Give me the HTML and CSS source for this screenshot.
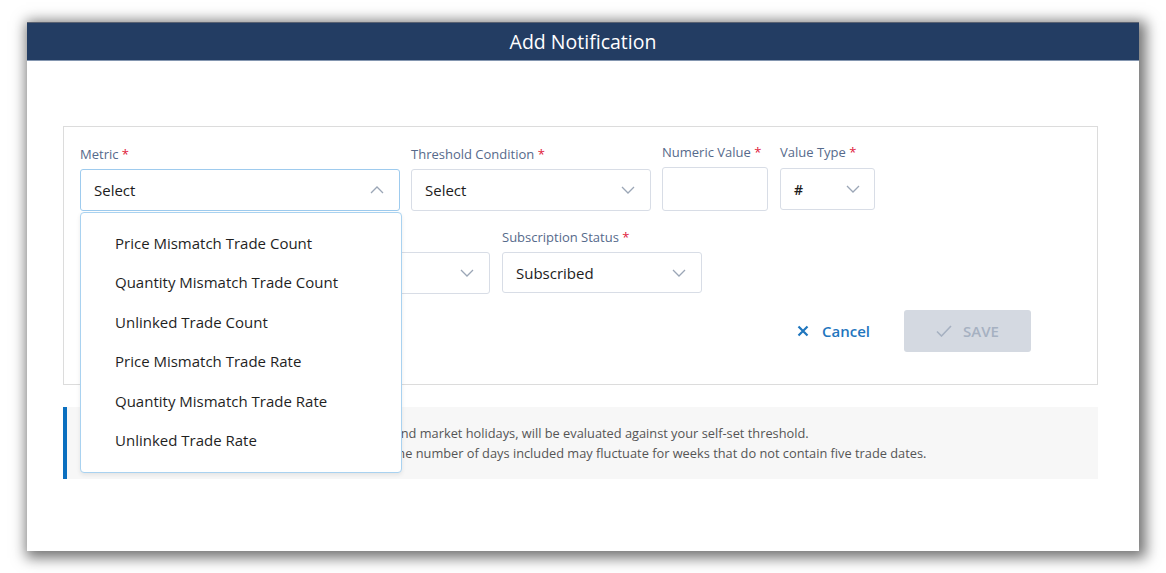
FILE: index.html
```html
<!DOCTYPE html>
<html lang="en">
<head>
    <meta charset="UTF-8">
    <meta name="viewport" content="width=device-width, initial-scale=1.0">
    <title>Add Notification</title>
    <link rel="stylesheet" href="styles.css">
</head>
<body>
    <div class="modal">
        <div class="modal-header">Add Notification</div>

        <div class="modal-body">
            <div class="form-card">
                <div class="form-row">
                    <div class="field field-metric">
                        <label>Metric <span class="req">*</span></label>
                        <div class="select is-open">
                            <span>Select</span>
                            <svg class="chevron" width="14" height="8" viewBox="0 0 14 8"><path d="M1 7 L7 1 L13 7"/></svg>
                        </div>
                        <ul class="menu">
                            <li>Price Mismatch Trade Count</li>
                            <li>Quantity Mismatch Trade Count</li>
                            <li>Unlinked Trade Count</li>
                            <li>Price Mismatch Trade Rate</li>
                            <li>Quantity Mismatch Trade Rate</li>
                            <li>Unlinked Trade Rate</li>
                        </ul>
                    </div>
                    <div class="field field-threshold">
                        <label>Threshold Condition <span class="req">*</span></label>
                        <div class="select">
                            <span>Select</span>
                            <svg class="chevron" width="14" height="8" viewBox="0 0 14 8"><path d="M1 1 L7 7 L13 1"/></svg>
                        </div>
                    </div>
                    <div class="field field-numeric">
                        <label>Numeric Value <span class="req">*</span></label>
                        <input type="text" class="input">
                    </div>
                    <div class="field field-type">
                        <label>Value Type <span class="req">*</span></label>
                        <div class="select">
                            <span class="hash">#</span>
                            <svg class="chevron" width="14" height="8" viewBox="0 0 14 8"><path d="M1 1 L7 7 L13 1"/></svg>
                        </div>
                    </div>
                </div>

                <div class="form-row row-second">
                    <div class="field field-frequency">
                        <label>Frequency <span class="req">*</span></label>
                        <div class="select">
                            <span>Daily</span>
                            <svg class="chevron" width="14" height="8" viewBox="0 0 14 8"><path d="M1 1 L7 7 L13 1"/></svg>
                        </div>
                    </div>
                    <div class="field field-status">
                        <label>Subscription Status <span class="req">*</span></label>
                        <div class="select">
                            <span>Subscribed</span>
                            <svg class="chevron" width="14" height="8" viewBox="0 0 14 8"><path d="M1 1 L7 7 L13 1"/></svg>
                        </div>
                    </div>
                </div>

                <div class="form-actions">
                    <button class="btn-cancel">
                        <svg width="12" height="12" viewBox="0 0 12 12"><path d="M1.5 1.5 L10.5 10.5 M10.5 1.5 L1.5 10.5"/></svg>
                        Cancel
                    </button>
                    <button class="btn-save" disabled>
                        <svg width="16" height="12" viewBox="0 0 16 12"><path d="M1 6.5 L5.5 11 L15 1"/></svg>
                        SAVE
                    </button>
                </div>
            </div>

            <div class="info-note">
                <p>Only trade dates in the period, excluding weekends and market holidays, will be evaluated against your self-set threshold.</p>
                <p>For notifications that are set to a weekly frequency, the number of days included may fluctuate for weeks that do not contain five trade dates.</p>
            </div>
        </div>
    </div>
</body>
</html>
```

FILE: styles.css
```css
body {
    margin: 0;
    background-color: #ffffff;
    font-family: "Open Sans", "Noto Sans", sans-serif;
    width: 1166px;
    height: 573px;
    overflow: hidden;
}

.modal {
    margin: 22px 0 0 27px;
    width: 1112px;
    height: 529px;
    background-color: #ffffff;
    box-shadow: 3px 3px 13px 4px rgba(0, 0, 0, 0.55);
}

.modal-header {
    height: 37px;
    line-height: 38px;
    background-color: #233d63;
    border-top: 1px solid #5a6272;
    border-bottom: 1px solid #8496b0;
    color: #ffffff;
    font-size: 19.5px;
    text-align: center;
    box-sizing: content-box;
}

.modal-body {
    padding: 65px 41px 0 36px;
}

/* form block */
.form-card {
    border: 1px solid #dcdcdc;
    padding: 18px 66px 32px 16px;
}

.form-row {
    display: flex;
    align-items: flex-start;
}

.row-second {
    margin-top: 17px;
}

.field {
    position: relative;
    margin-right: 11px;
}

.field label {
    display: block;
    height: 18px;
    line-height: 18px;
    margin-bottom: 6px;
    font-size: 13px;
    color: #566a8b;
}

.req {
    color: #e0203a;
}

.field-metric { width: 320px; }
.field-threshold { width: 240px; }
.field-numeric { width: 106px; margin-right: 12px; }
.field-type { width: 95px; }
.field-frequency { width: 410px; margin-right: 12px; }
.field-status { width: 200px; }

.field-numeric label {
    margin-top: -2px;
}

.field-type label {
    margin-top: -2px;
    margin-bottom: 7px;
}

.select {
    display: flex;
    align-items: center;
    justify-content: space-between;
    height: 40px;
    padding: 0 15px 0 13px;
    border: 1px solid #d8dde6;
    border-radius: 3px;
    font-size: 15px;
    color: #1c1c1c;
    box-sizing: content-box;
}

.select.is-open {
    border-color: #9ecbee;
}

.field-type .select {
    padding-left: 13px;
    padding-right: 14px;
}

.field-status .select {
    height: 39px;
}

.hash {
    font-weight: 600;
    font-size: 14px;
}

.chevron path {
    fill: none;
    stroke: #9ba6b6;
    stroke-width: 1.3;
}

.input {
    display: block;
    width: 100%;
    height: 44px;
    margin: 0;
    border: 1px solid #d8dde6;
    border-radius: 3px;
    box-sizing: border-box;
}

/* open dropdown of the metric select */
.menu {
    position: absolute;
    top: 67px;
    left: 0;
    z-index: 5;
    width: 320px;
    margin: 0;
    padding: 11px 0 12px 0;
    list-style: none;
    background-color: #ffffff;
    border: 1px solid #a9d2f0;
    border-radius: 4px;
    box-shadow: 0 2px 4px rgba(0, 0, 0, 0.08);
}

.menu li {
    height: 39.4px;
    line-height: 39.4px;
    padding-left: 34px;
    font-size: 15px;
    color: #1f1f1f;
}

/* buttons */
.form-actions {
    display: flex;
    justify-content: flex-end;
    align-items: center;
    margin-top: 16px;
}

.form-actions button {
    display: flex;
    align-items: center;
    font-family: "Open Sans", "Noto Sans", sans-serif;
    font-size: 15px;
    font-weight: 600;
    border: none;
    background: none;
    cursor: pointer;
}

.btn-cancel {
    color: #1f76be;
    margin-right: 34px;
    padding: 0;
}

.btn-cancel svg {
    margin-right: 13px;
}

.btn-cancel path {
    stroke: #1f76be;
    stroke-width: 2.2;
    fill: none;
}

.btn-save {
    justify-content: center;
    width: 127px;
    height: 42px;
    border-radius: 3px;
    background-color: #d4d9e1 !important;
    color: #a6b1c1;
}

.btn-save svg {
    margin-right: 11px;
}

.btn-save path {
    stroke: #a6b1c1;
    stroke-width: 1.6;
    fill: none;
}

/* info note under the form */
.info-note {
    margin-top: 22px;
    padding: 17px 10px 16px 18px;
    border-left: 4px solid #0b6fbf;
    background-color: #f7f7f7;
}

.info-note p {
    margin: 0;
    font-size: 12.8px;
    line-height: 19.5px;
    color: #555555;
}
```
